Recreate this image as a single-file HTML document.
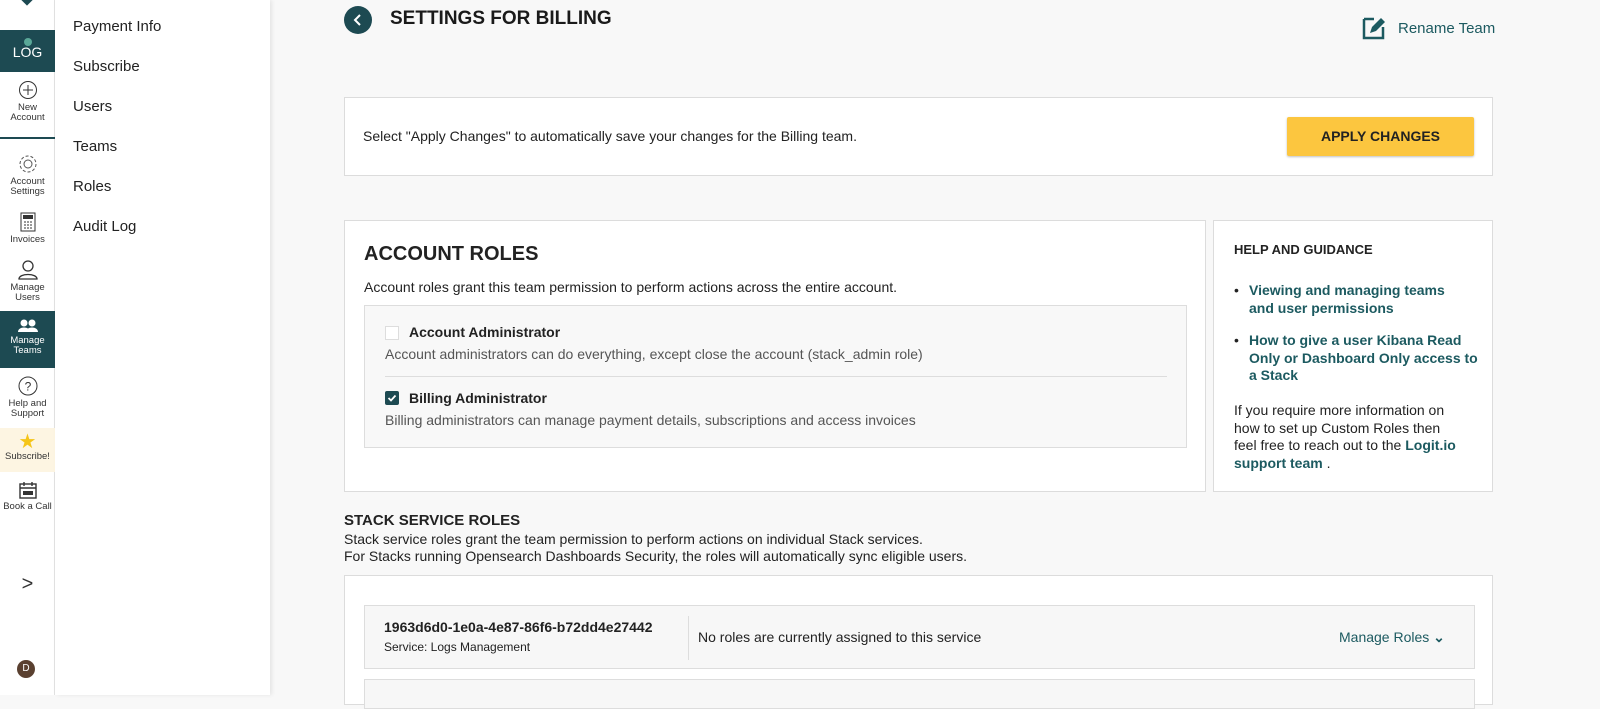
<!DOCTYPE html>
<html><head><style>
*{box-sizing:border-box;margin:0;padding:0}
body{width:1600px;height:695px;overflow:hidden;background:#f8f8f8;font-family:"Liberation Sans",sans-serif;color:#222;position:relative}
.rail{position:absolute;left:0;top:0;width:55px;height:695px;background:#fff;border-right:1px solid #e2e2e2}
.ri{position:absolute;left:0;width:55px;text-align:center;font-size:9.5px;line-height:10px;color:#333}
.sub{position:absolute;left:55px;top:0;width:215px;height:695px;background:#fff;box-shadow:2px 0 4px rgba(0,0,0,.08)}
.sub div{position:absolute;left:18px;font-size:15px;color:#222}
.teal{color:#1c5a60}
.card{position:absolute;background:#fff;border:1px solid #dcdcdc}
a{color:#1c5a60;text-decoration:none;font-weight:bold}
</style></head><body>
<div class="rail">
<div style="position:absolute;left:23px;top:-4px;width:8px;height:8px;background:#1d4a52;transform:rotate(45deg)"></div>
<div class="ri" style="top:30px;height:42px;background:#1d4a52;color:#fff;font-size:14px;padding-top:8px"><div style="width:8px;height:8px;border-radius:50%;background:#5aa898;margin:0 auto 1px"></div>LOG</div>
<div class="ri" style="top:80px"><svg width="20" height="20"><circle cx="10" cy="10" r="8.5" fill="none" stroke="#333"/><path d="M10 5v10M5 10h10" stroke="#333"/></svg><br>New<br>Account</div>
<div style="position:absolute;left:0;top:137px;width:55px;height:2px;background:#1d4a52"></div>
<div class="ri" style="top:154px"><svg width="20" height="20"><circle cx="10" cy="10" r="8" fill="none" stroke="#555" stroke-dasharray="3 2"/><circle cx="10" cy="10" r="4" fill="none" stroke="#555"/></svg><br>Account<br>Settings</div>
<div class="ri" style="top:212px"><svg width="16" height="20"><rect x="1" y="1" width="14" height="18" fill="none" stroke="#333"/><rect x="3" y="3" width="10" height="4" fill="#333"/><path d="M4 10h2M7 10h2M10 10h2M4 13h2M7 13h2M10 13h2M4 16h2M7 16h2M10 16h2" stroke="#333"/></svg><br>Invoices</div>
<div class="ri" style="top:260px"><svg width="22" height="20"><circle cx="11" cy="6" r="5" fill="none" stroke="#333" stroke-width="1.3"/><path d="M2 19c0-6 18-6 18 0z" fill="none" stroke="#333" stroke-width="1.3"/></svg><br>Manage<br>Users</div>
<div class="ri" style="top:311px;height:57px;background:#1d4a52;color:#fff;padding-top:8px"><svg width="20" height="14"><circle cx="6" cy="4" r="3.5" fill="#fff"/><circle cx="14" cy="4" r="3.5" fill="#fff"/><path d="M0 13c0-6 12-6 12 0zM8 13c0-6 12-6 12 0z" fill="#fff"/></svg><br>Manage<br>Teams</div>
<div class="ri" style="top:376px"><svg width="20" height="20"><circle cx="10" cy="10" r="9" fill="none" stroke="#333"/><text x="10" y="14.5" font-size="12" text-anchor="middle" fill="#333" font-family="Liberation Sans">?</text></svg><br>Help and<br>Support</div>
<div class="ri" style="top:428px;height:44px;background:#fdf5e2;padding-top:4px"><span style="color:#f5c518;font-size:20px;line-height:20px">★</span><br>Subscribe!</div>
<div class="ri" style="top:481px"><svg width="18" height="18"><rect x="1" y="3" width="16" height="14" fill="none" stroke="#333" stroke-width="1.4"/><path d="M5 1v4M13 1v4M1 7h16" stroke="#333" stroke-width="1.4"/><rect x="4" y="10" width="10" height="4" fill="#333"/></svg><br>Book a Call</div>
<div class="ri" style="top:572px;font-size:20px;line-height:24px">&gt;</div>
<div style="position:absolute;left:17px;top:660px;width:18px;height:18px;border-radius:50%;background:#5a4030;color:#fff;font-size:10px;text-align:center;line-height:18px">D</div>
</div>
<div class="sub">
<div style="top:18px">Payment Info</div><div style="top:58px">Subscribe</div><div style="top:98px">Users</div><div style="top:138px">Teams</div><div style="top:178px">Roles</div><div style="top:218px">Audit Log</div>
</div>
<div style="position:absolute;left:344px;top:6px;width:28px;height:28px;border-radius:50%;background:#1d4a52"><svg width="28" height="28"><path d="M16 9l-5 5 5 5" fill="none" stroke="#fff" stroke-width="2"/></svg></div>
<div style="position:absolute;left:390px;top:8px;font-size:19px;font-weight:bold;color:#1a1a1a">SETTINGS FOR BILLING</div>
<svg style="position:absolute;left:1362px;top:14px" width="26" height="26"><path d="M2 5h10M2 5v19h19V13" fill="none" stroke="#1c5a60" stroke-width="2.5"/><path d="M8 19l2-6 9-9 4 4-9 9z" fill="#1c5a60"/></svg>
<div class="teal" style="position:absolute;left:1398px;top:20px;font-size:15px">Rename Team</div>
<div class="card" style="left:344px;top:97px;width:1149px;height:79px">
<div style="position:absolute;left:18px;top:30px;font-size:14px">Select "Apply Changes" to automatically save your changes for the Billing team.</div>
<div style="position:absolute;left:942px;top:19px;width:187px;height:39px;background:#fcc63f;border-radius:2px;box-shadow:0 1px 2px rgba(0,0,0,.25);text-align:center;line-height:39px;font-size:14px;font-weight:bold;color:#222">APPLY CHANGES</div>
</div>
<div class="card" style="left:344px;top:220px;width:862px;height:272px">
<div style="position:absolute;left:19px;top:22px;font-size:20px;font-weight:bold">ACCOUNT ROLES</div>
<div style="position:absolute;left:19px;top:58px;font-size:14px">Account roles grant this team permission to perform actions across the entire account.</div>
<div style="position:absolute;left:19px;top:84px;width:823px;height:143px;background:#f8f8f8;border:1px solid #ddd">
<div style="position:absolute;left:20px;top:20px;width:14px;height:14px;border:1px solid #ddd;background:#fff"></div>
<div style="position:absolute;left:44px;top:18px;font-size:14px;font-weight:bold">Account Administrator</div>
<div style="position:absolute;left:20px;top:40px;font-size:14px;color:#555">Account administrators can do everything, except close the account (stack_admin role)</div>
<div style="position:absolute;left:20px;top:70px;width:782px;height:1px;background:#ddd"></div>
<div style="position:absolute;left:20px;top:85px;width:14px;height:14px;background:#1d4a52;border-radius:2px"><svg width="14" height="14"><path d="M3.5 7l2.5 2.5 4.5-5" fill="none" stroke="#fff" stroke-width="1.8"/></svg></div>
<div style="position:absolute;left:44px;top:84px;font-size:14px;font-weight:bold">Billing Administrator</div>
<div style="position:absolute;left:20px;top:106px;font-size:14px;color:#555">Billing administrators can manage payment details, subscriptions and access invoices</div>
</div></div>
<div class="card" style="left:1213px;top:220px;width:280px;height:272px;font-size:14px;line-height:17.5px">
<div style="position:absolute;left:20px;top:20px;font-size:13px;font-weight:bold">HELP AND GUIDANCE</div>
<div style="position:absolute;left:20px;top:61px">•</div><div style="position:absolute;left:35px;top:61px;width:215px"><a>Viewing and managing teams<br>and user permissions</a></div>
<div style="position:absolute;left:20px;top:111px">•</div><div style="position:absolute;left:35px;top:111px;width:240px"><a>How to give a user Kibana Read<br>Only or Dashboard Only access to<br>a Stack</a></div>
<div style="position:absolute;left:20px;top:181px;width:232px">If you require more information on how to set up Custom Roles then feel free to reach out to the <a>Logit.io support team</a> .</div>
</div>
<div style="position:absolute;left:344px;top:512px;font-size:15px;font-weight:bold">STACK SERVICE ROLES</div>
<div style="position:absolute;left:344px;top:531px;font-size:14px;line-height:17px">Stack service roles grant the team permission to perform actions on individual Stack services.<br>For Stacks running Opensearch Dashboards Security, the roles will automatically sync eligible users.</div>
<div class="card" style="left:344px;top:575px;width:1149px;height:130px">
<div style="position:absolute;left:19px;top:29px;width:1111px;height:64px;background:#f7f7f7;border:1px solid #ddd">
<div style="position:absolute;left:19px;top:13px;font-size:14px;font-weight:bold">1963d6d0-1e0a-4e87-86f6-b72dd4e27442</div>
<div style="position:absolute;left:19px;top:34px;font-size:12px">Service: Logs Management</div>
<div style="position:absolute;left:323px;top:10px;width:1px;height:44px;background:#ddd"></div>
<div style="position:absolute;left:333px;top:23px;font-size:14px">No roles are currently assigned to this service</div>
<div class="teal" style="position:absolute;left:974px;top:23px;font-size:14px">Manage Roles <b>⌄</b></div>
</div>
<div style="position:absolute;left:19px;top:103px;width:1111px;height:30px;background:#f7f7f7;border:1px solid #ddd"></div>
</div>
</body></html>
